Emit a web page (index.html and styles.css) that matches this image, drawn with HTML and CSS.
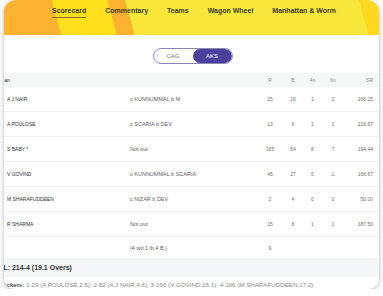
FILE: index.html
```html
<!DOCTYPE html>
<html lang="en">
<head>
  <meta charset="UTF-8">
  <meta name="viewport" content="width=device-width, initial-scale=1.0">
  <title>Scorecard</title>
  <link rel="stylesheet" href="styles.css">
</head>
<body>
  <div class="card">
    <nav class="tabs">
      <a class="tab active">Scorecard</a>
      <a class="tab">Commentary</a>
      <a class="tab">Teams</a>
      <a class="tab">Wagon Wheel</a>
      <a class="tab">Manhattan &amp; Worm</a>
    </nav>

    <div class="toggle-row">
      <div class="toggle">
        <span class="opt">CAG</span>
        <span class="opt on">AKS</span>
      </div>
    </div>

    <div class="score">
      <div class="row head">
        <span class="name"><span class="clip-bat">Batsman</span></span>
        <span></span>
        <span class="num">R</span>
        <span class="num">B</span>
        <span class="num">4s</span>
        <span class="num">6s</span>
        <span class="sr">SR</span>
      </div>
      <div class="row">
        <span class="name">A J NAIR</span>
        <span class="out">c KUNNUMMAL b M</span>
        <span class="num">25</span><span class="num">16</span><span class="num">1</span><span class="num">2</span>
        <span class="sr">166.25</span>
      </div>
      <div class="row">
        <span class="name">A POULOSE</span>
        <span class="out">c SCARIA b DEV</span>
        <span class="num">13</span><span class="num">6</span><span class="num">1</span><span class="num">1</span>
        <span class="sr">216.67</span>
      </div>
      <div class="row">
        <span class="name">S BABY *</span>
        <span class="out">Not out</span>
        <span class="num">165</span><span class="num">54</span><span class="num">8</span><span class="num">7</span>
        <span class="sr">194.44</span>
      </div>
      <div class="row">
        <span class="name">V GOVIND</span>
        <span class="out">c KUNNUMMAL b SCARIA</span>
        <span class="num">45</span><span class="num">27</span><span class="num">5</span><span class="num">1</span>
        <span class="sr">166.67</span>
      </div>
      <div class="row">
        <span class="name">M SHARAFUDDEEN</span>
        <span class="out">c NIZAR b DEV</span>
        <span class="num">2</span><span class="num">4</span><span class="num">0</span><span class="num">0</span>
        <span class="sr">50.00</span>
      </div>
      <div class="row">
        <span class="name">R SHARMA</span>
        <span class="out">Not out</span>
        <span class="num">15</span><span class="num">8</span><span class="num">1</span><span class="num">1</span>
        <span class="sr">187.50</span>
      </div>
      <div class="row extras">
        <span class="name"></span>
        <span class="out">(4 wd,1 lb,4 B,)</span>
        <span class="num">9</span><span></span><span></span><span></span><span></span>
      </div>
    </div>

    <div class="total"><span class="clip-total">TOTAL: 214-4 (19.1 Overs)</span></div>
    <div class="fow"><b class="clip-fow">Fall of Wickets:</b> 1-29 (A POULOSE,2.5), 2-52 (A J NAIR,4.6), 3-166 (V GOVIND,15.1), 4-186 (M SHARAFUDDEEN,17.2)</div>
  </div>
</body>
</html>
```

FILE: styles.css
```css
body {
  margin: 0;
  background-color: #fff;
  font-family: "Liberation Sans", Arial, sans-serif;
  color: #333;
}
.card {
  margin: 0 4px;
  height: 289px;
  border-radius: 12px 12px 10px 10px;
  overflow: hidden;
  background-color: #fff;
  box-shadow: 0 1px 5px rgba(0, 0, 0, 0.3);
}

/* yellow header with tabs */
.tabs {
  display: flex;
  gap: 19px;
  height: 35px;
  padding-left: 48px;
  background: linear-gradient(75deg, #fbb22f 0 55px, #fddf1b 55px 109px, #fbb22f 109px 126px, #f9e73a 126px 352px, #fcd91f 352px);
}
.tab {
  padding-top: 7px;
  font-size: 7px;
  font-weight: bold;
  color: #3b3a30;
}
.tab.active {
  align-self: flex-start;
  padding-bottom: 3px;
  border-bottom: 1.5px solid #8c6f2e;
}

/* team toggle */
.toggle-row {
  display: flex;
  justify-content: center;
  padding: 13px 0 9px 2px;
}
.toggle {
  display: flex;
  width: 80px;
  height: 16px;
  box-sizing: border-box;
  border: 1px solid #8b86b3;
  border-radius: 8px;
  overflow: hidden;
}
.opt {
  flex: 1;
  display: flex;
  align-items: center;
  justify-content: center;
  font-size: 6px;
  color: #777;
}
.opt.on {
  background-color: #4b409c;
  color: #fff;
  border-radius: 8px;
}

/* batting table */
.row {
  display: grid;
  grid-template-columns: 123px 128px 24px 22px 17px 24px 28px;
  align-items: center;
  box-sizing: border-box;
  height: 25px;
  padding-left: 3px;
  border-bottom: 1px solid #f1f1f3;
  font-size: 5px;
}
.row.head {
  height: 14px;
  background-color: #f6f7f9;
  border-bottom: none;
  color: #888;
}
.row.extras {
  height: 21px;
  border-bottom: none;
}
.name {
  color: #2e2e2e;
  white-space: nowrap;
}
.out {
  font-size: 5.5px;
  color: #5e5e5e;
}
.num {
  text-align: center;
  color: #6e6e6e;
}
.sr {
  text-align: right;
  color: #6e6e6e;
}
.head .num, .head .sr {
  color: #888;
}
.clip-bat {
  margin-left: -17px;
}

.total {
  height: 19px;
  display: flex;
  align-items: center;
  background-color: #f5f6f8;
  font-size: 7px;
  font-weight: bold;
  color: #333;
  white-space: nowrap;
}
.clip-total {
  margin-left: -19px;
}
.fow {
  padding-top: 4px;
  font-size: 6.2px;
  color: #888;
  white-space: nowrap;
}
.clip-fow {
  margin-left: -25px;
  color: #555;
}
```
